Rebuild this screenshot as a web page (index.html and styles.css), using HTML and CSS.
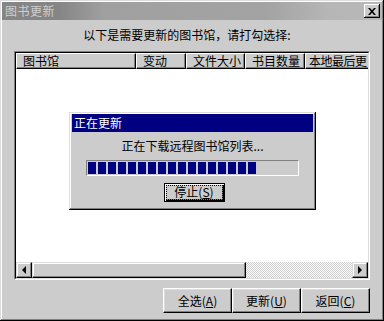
FILE: index.html
```html
<!DOCTYPE html>
<html>
<head>
<meta charset="utf-8">
<link rel="stylesheet" href="styles.css">
</head>
<body>
<div class="window">
  <div class="titlebar">
    <span class="title">图书更新</span>
    <button class="close" type="button"><svg width="8" height="7" viewBox="0 0 8 7"><path d="M0 0h2l2 2.2L6 0h2L5 3.5 8 7H6L4 4.8 2 7H0l3-3.5z" fill="#000"/></svg></button>
  </div>
  <div class="content">
    <p class="instruction">以下是需要更新的图书馆，请打勾选择:</p>
    <div class="list">
      <div class="list-inner">
        <div class="header">
          <div class="hcell c1">图书馆</div>
          <div class="hcell c2">变动</div>
          <div class="hcell c3">文件大小</div>
          <div class="hcell c4">书目数量</div>
          <div class="hcell c5">本地最后更</div>
        </div>
        <div class="rows"></div>
        <div class="hscroll">
          <div class="sbtn"><span class="arrow-left"></span></div>
          <div class="thumb"></div>
          <div class="track"></div>
          <div class="sbtn"><span class="arrow-right"></span></div>
        </div>
      </div>
    </div>
    <div class="actions">
      <button class="btn" type="button">全选(<u>A</u>)</button>
      <button class="btn" type="button">更新(<u>U</u>)</button>
      <button class="btn" type="button">返回(<u>C</u>)</button>
    </div>
  </div>
  <div class="modal">
    <div class="mtitle">正在更新</div>
    <p class="message">正在下载远程图书馆列表...</p>
    <div class="progress">
      <span class="blk"></span><span class="blk"></span><span class="blk"></span><span class="blk"></span><span class="blk"></span><span class="blk"></span><span class="blk"></span><span class="blk"></span><span class="blk"></span><span class="blk"></span><span class="blk"></span><span class="blk"></span><span class="blk"></span><span class="blk"></span><span class="blk"></span><span class="blk"></span><span class="blk"></span>
    </div>
    <button class="stop" type="button"><span class="focus">停止(<u>S</u>)</span></button>
  </div>
</div>
</body>
</html>
```

FILE: styles.css
```css
* { box-sizing: border-box; }
html, body { margin: 0; padding: 0; background: #cccccc; }
body {
  font-family: "Noto Sans CJK SC", "Liberation Sans", sans-serif;
  font-size: 12px;
  color: #000;
}
.window {
  position: relative;
  width: 384px;
  height: 321px;
  background: #cccccc;
  padding: 2px;
  box-shadow: inset -1px -1px #000, inset 1px 1px #dcdcdc, inset -2px -2px #808080, inset 2px 2px #fff;
  display: flex;
  flex-direction: column;
}
.titlebar {
  height: 18px;
  display: flex;
  align-items: center;
  justify-content: space-between;
  padding: 0 2px 0 3px;
  background: linear-gradient(to right, #858585 0, #858585 15%, #a0a0a0 27%, #a3a3a3 70%, #b6b6b6 86%, #b8b8b8 100%);
}
.title {
  color: #cfcfcf;
  font-size: 12px;
  line-height: 14px;
  letter-spacing: 0.5px;
}
.close {
  width: 16px;
  height: 14px;
  padding: 0;
  margin: 0;
  border: 0;
  background: #cccccc;
  box-shadow: inset -1px -1px #000, inset 1px 1px #fff, inset -2px -2px #808080;
  display: flex;
  align-items: center;
  justify-content: center;
}
.close svg { display: block; }
.content {
  flex: 1;
  display: flex;
  flex-direction: column;
}
.instruction {
  margin: 8px 0 0 0;
  height: 14px;
  line-height: 14px;
  text-align: center;
  padding-right: 10px;
}
.list {
  margin: 9px 0 0 12px;
  width: 356px;
  height: 229px;
  border: 1px solid;
  border-color: #808080 #fff #fff #808080;
}
.list-inner {
  height: 100%;
  border: 1px solid;
  border-color: #000 #dcdcdc #dcdcdc #000;
  background: #fff;
  display: flex;
  flex-direction: column;
  overflow: hidden;
}
.header {
  display: flex;
  height: 16px;
  flex: none;
  overflow: hidden;
}
.hcell {
  flex: none;
  height: 16px;
  line-height: 14px;
  padding-left: 6px;
  background: #cccccc;
  white-space: nowrap;
  overflow: hidden;
  border: 1px solid;
  border-color: #fff #000 #000 #fff;
  box-shadow: inset -1px -1px #808080;
}
.c1 { width: 120px; }
.c2 { width: 50px; }
.c3 { width: 59px; }
.c4 { width: 60px; }
.c5 { width: 66px; padding-left: 3px; letter-spacing: -0.5px; }
.rows { flex: 1; }
.hscroll {
  height: 16px;
  flex: none;
  display: flex;
}
.sbtn {
  width: 16px;
  height: 16px;
  flex: none;
  background: #cccccc;
  border: 1px solid;
  border-color: #dcdcdc #000 #000 #dcdcdc;
  box-shadow: inset -1px -1px #808080, inset 1px 1px #fff;
  display: flex;
  align-items: center;
  justify-content: center;
}
.arrow-left {
  width: 0; height: 0;
  border-top: 4px solid transparent;
  border-bottom: 4px solid transparent;
  border-right: 4px solid #000;
}
.arrow-right {
  width: 0; height: 0;
  border-top: 4px solid transparent;
  border-bottom: 4px solid transparent;
  border-left: 4px solid #000;
}
.thumb {
  width: 214px;
  flex: none;
  background: #cccccc;
  border: 1px solid;
  border-color: #dcdcdc #000 #000 #dcdcdc;
  box-shadow: inset -1px -1px #808080, inset 1px 1px #fff;
}
.track {
  flex: 1;
  background: repeating-conic-gradient(#fff 0 25%, #cccccc 0 50%) 0 0 / 2px 2px;
}
.actions {
  margin: 8px 12px 0 0;
  display: flex;
  justify-content: flex-end;
}
.btn {
  width: 69px;
  height: 25px;
  padding: 0;
  font-family: inherit;
  font-size: 12px;
  color: #000;
  background: #cccccc;
  border: 1px solid;
  border-color: #fff #000 #000 #fff;
  box-shadow: inset -1px -1px #808080, inset 1px 1px #dcdcdc;
}
.btn u, .stop u { text-decoration: underline; text-underline-offset: 1px; }
.modal {
  position: absolute;
  left: 69px;
  top: 112px;
  width: 247px;
  height: 98px;
  background: #cccccc;
  padding: 2px 3px 3px 3px;
  box-shadow: inset -1px -1px #000, inset 1px 1px #dcdcdc, inset -2px -2px #808080, inset 2px 2px #fff;
  display: flex;
  flex-direction: column;
  align-items: center;
}
.mtitle {
  align-self: stretch;
  height: 18px;
  line-height: 18px;
  background: #000080;
  color: #fff;
  padding-left: 2px;
}
.message {
  margin: 6px 0 0 0;
  height: 16px;
  line-height: 16px;
  text-align: center;
}
.progress {
  margin-top: 6px;
  width: 213px;
  height: 16px;
  border: 1px solid;
  border-color: #808080 #fff #fff #808080;
  padding: 1px 1px;
  display: flex;
  gap: 2px;
}
.blk {
  width: 8px;
  height: 12px;
  background: #000080;
}
.stop {
  margin-top: 7px;
  margin-left: 3px;
  width: 61px;
  height: 19px;
  padding: 2px;
  font-family: inherit;
  font-size: 12px;
  color: #000;
  background: #cccccc;
  border: 1px solid #000;
  box-shadow: inset 1px 1px #fff, inset -1px -1px #000, inset -2px -2px #808080;
}
.focus {
  display: block;
  height: 13px;
  line-height: 12px;
  outline: 1px dotted #000;
  outline-offset: 0;
}
```
